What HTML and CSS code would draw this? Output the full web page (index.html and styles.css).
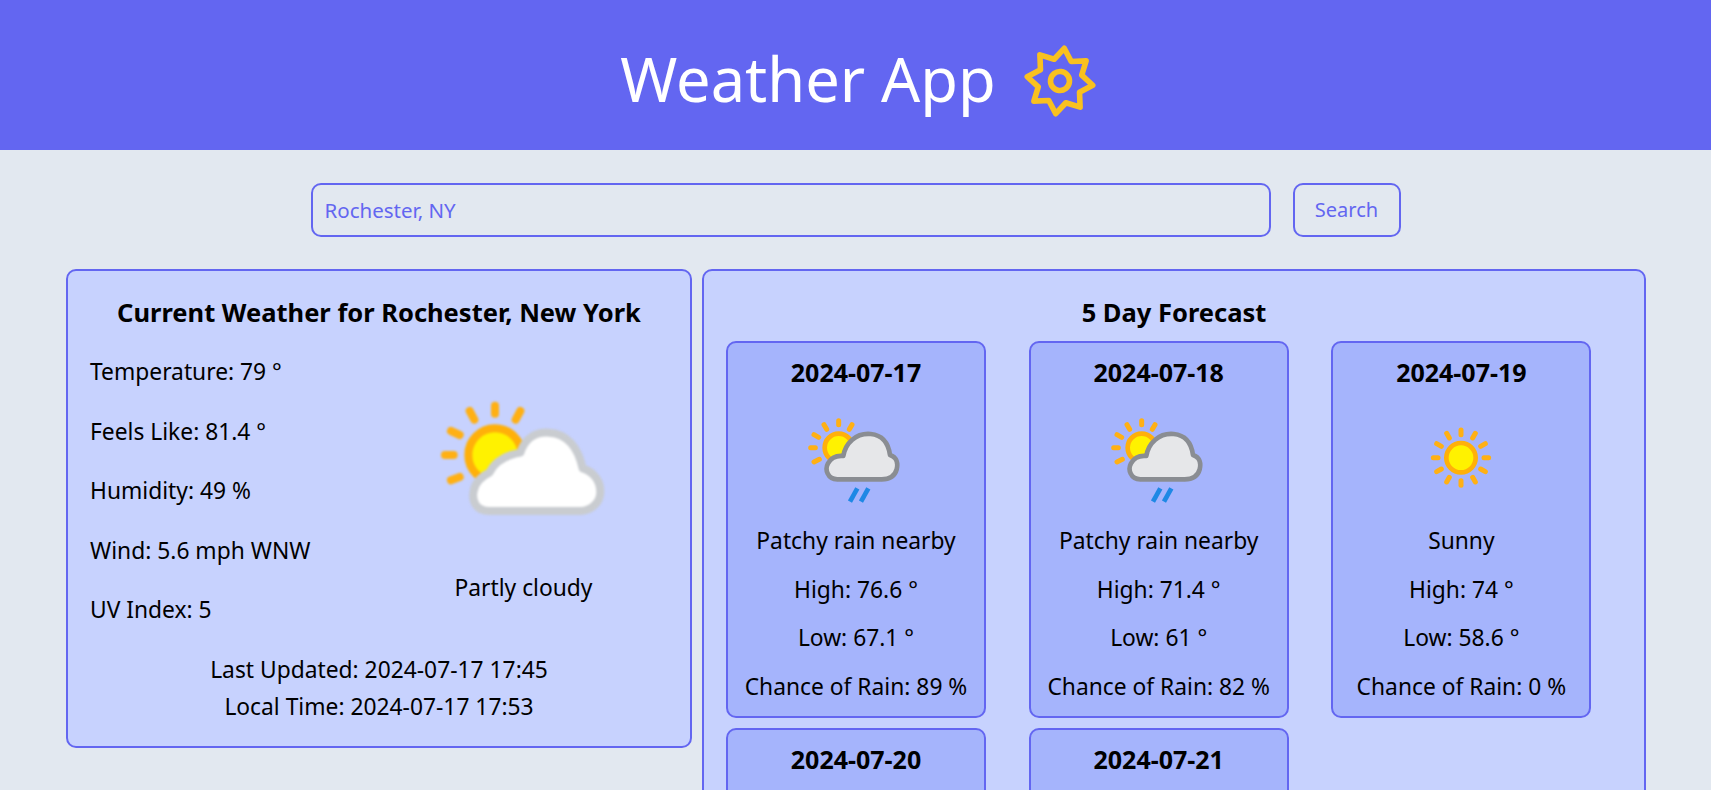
FILE: index.html
```html
<!DOCTYPE html>
<html lang="en">
<head>
<meta charset="utf-8">
<title>Weather App</title>
<link rel="stylesheet" href="styles.css">
</head>
<body>
<header class="app-header">
  <h1 class="app-title">Weather App</h1>
  <svg class="app-logo" viewBox="-36 -36 72 72" aria-hidden="true">
    <g transform="rotate(7.4)" fill="none" stroke="#f9c11f" stroke-width="5.6" stroke-linejoin="round">
      <polygon points="0,-33 8.6,-20.8 23.3,-23.3 20.8,-8.6 33,0 20.8,8.6 23.3,23.3 8.6,20.8 0,33 -8.6,20.8 -23.3,23.3 -20.8,8.6 -33,0 -20.8,-8.6 -23.3,-23.3 -8.6,-20.8"/>
      <circle r="9.5"/>
    </g>
  </svg>
</header>
<form class="search">
  <input class="search-input" type="text" placeholder="Rochester, NY">
  <button class="search-button" type="button">Search</button>
</form>
<main class="panels">
  <section class="panel">
    <h2 class="panel-title">Current Weather for Rochester, New York</h2>
    <div class="current">
      <div class="current-stats">
        <p>Temperature: 79 °</p>
        <p>Feels Like: 81.4 °</p>
        <p>Humidity: 49 %</p>
        <p>Wind: 5.6 mph WNW</p>
        <p>UV Index: 5</p>
      </div>
      <div class="current-condition">
        <svg class="icon-large" viewBox="0 0 618 450" aria-hidden="true">
          <g stroke="#ffb014" stroke-width="24" stroke-linecap="round">
            <line x1="222" y1="74" x2="222" y2="98"/>
            <line x1="146" y1="90" x2="160" y2="116"/>
            <line x1="298" y1="90" x2="284" y2="116"/>
            <line x1="90" y1="150" x2="116" y2="162"/>
            <line x1="72" y1="222" x2="98" y2="222"/>
            <line x1="90" y1="298" x2="116" y2="288"/>
          </g>
          <circle cx="222" cy="222" r="80" fill="#fff200" stroke="#ffb00a" stroke-width="24"/>
          <path d="M205 390 C165 390 152 360 158 330 C163 300 185 285 205 275 C222 240 260 222 298 215 C312 172 345 152 385 155 C435 158 470 195 485 262 C518 272 538 300 538 332 C538 365 510 390 478 390 Z" fill="#fff" stroke="#c9ccd0" stroke-width="24" stroke-linejoin="round"/>
        </svg>
        <p class="condition-label">Partly cloudy</p>
      </div>
    </div>
    <div class="current-times">
      <p>Last Updated: 2024-07-17 17:45</p>
      <p>Local Time: 2024-07-17 17:53</p>
    </div>
  </section>
  <section class="panel panel-forecast">
    <h2 class="panel-title">5 Day Forecast</h2>
    <div class="forecast-grid">
      <article class="day">
        <h3 class="day-date">2024-07-17</h3>
        <svg class="icon-day" viewBox="18 0 420 360" aria-hidden="true">
          <g stroke="#ffb014" stroke-width="15" stroke-linecap="round">
            <line x1="176" y1="62" x2="176" y2="74"/><line x1="132" y1="74" x2="140" y2="88"/><line x1="216" y1="74" x2="208" y2="88"/>
            <line x1="102" y1="104" x2="116" y2="112"/><line x1="92" y1="143" x2="106" y2="143"/><line x1="102" y1="186" x2="118" y2="178"/>
          </g>
          <circle cx="176" cy="143" r="42" fill="#fff200" stroke="#ffb00a" stroke-width="14"/>
          <path d="M172 238 C142 238 134 208 144 190 C154 172 170 166 190 168 C196 130 228 98 272 102 C312 106 326 135 330 165 C352 172 354 192 350 208 C344 230 325 238 305 238 Z" fill="#e6e7e9" stroke="#8a8d92" stroke-width="14" stroke-linejoin="round"/>
          <g stroke="#1e88e5" stroke-width="14"><line x1="232" y1="265" x2="210" y2="305"/><line x1="265" y1="265" x2="243" y2="305"/></g>
        </svg>
        <p>Patchy rain nearby</p>
        <p>High: 76.6 °</p>
        <p>Low: 67.1 °</p>
        <p>Chance of Rain: 89 %</p>
      </article>
      <article class="day">
        <h3 class="day-date">2024-07-18</h3>
        <svg class="icon-day" viewBox="18 0 420 360" aria-hidden="true">
          <g stroke="#ffb014" stroke-width="15" stroke-linecap="round">
            <line x1="176" y1="62" x2="176" y2="74"/><line x1="132" y1="74" x2="140" y2="88"/><line x1="216" y1="74" x2="208" y2="88"/>
            <line x1="102" y1="104" x2="116" y2="112"/><line x1="92" y1="143" x2="106" y2="143"/><line x1="102" y1="186" x2="118" y2="178"/>
          </g>
          <circle cx="176" cy="143" r="42" fill="#fff200" stroke="#ffb00a" stroke-width="14"/>
          <path d="M172 238 C142 238 134 208 144 190 C154 172 170 166 190 168 C196 130 228 98 272 102 C312 106 326 135 330 165 C352 172 354 192 350 208 C344 230 325 238 305 238 Z" fill="#e6e7e9" stroke="#8a8d92" stroke-width="14" stroke-linejoin="round"/>
          <g stroke="#1e88e5" stroke-width="14"><line x1="232" y1="265" x2="210" y2="305"/><line x1="265" y1="265" x2="243" y2="305"/></g>
        </svg>
        <p>Patchy rain nearby</p>
        <p>High: 71.4 °</p>
        <p>Low: 61 °</p>
        <p>Chance of Rain: 82 %</p>
      </article>
      <article class="day">
        <h3 class="day-date">2024-07-19</h3>
        <svg class="icon-day" viewBox="0 0 420 360" aria-hidden="true">
          <g stroke="#ffb014" stroke-width="15" stroke-linecap="round">
            <line x1="210" y1="90" x2="210" y2="104"/><line x1="210" y1="242" x2="210" y2="256"/><line x1="127" y1="173" x2="141" y2="173"/><line x1="279" y1="173" x2="293" y2="173"/>
            <line x1="167" y1="100" x2="175" y2="114"/><line x1="253" y1="100" x2="245" y2="114"/><line x1="167" y1="246" x2="175" y2="232"/><line x1="253" y1="246" x2="245" y2="232"/>
            <line x1="137" y1="131" x2="151" y2="139"/><line x1="283" y1="131" x2="269" y2="139"/><line x1="137" y1="215" x2="151" y2="207"/><line x1="283" y1="215" x2="269" y2="207"/>
          </g>
          <circle cx="210" cy="173" r="44" fill="#fff200" stroke="#ffb00a" stroke-width="14"/>
        </svg>
        <p>Sunny</p>
        <p>High: 74 °</p>
        <p>Low: 58.6 °</p>
        <p>Chance of Rain: 0 %</p>
      </article>
      <article class="day day-clipped">
        <h3 class="day-date">2024-07-20</h3>
      </article>
      <article class="day day-clipped">
        <h3 class="day-date">2024-07-21</h3>
      </article>
    </div>
  </section>
</main>
</body>
</html>
```

FILE: styles.css
```css
* { box-sizing: border-box; }
html, body { margin: 0; }
body {
  background: #e2e8f0;
  color: #000;
  font-family: "Noto Sans", "Open Sans", sans-serif;
  font-size: 22.8px;
  line-height: 32px;
}
p, h1, h2, h3 { margin: 0; }

.app-header {
  height: 150px;
  background: #6366f1;
  display: flex;
  align-items: center;
  justify-content: center;
  gap: 28px;
  padding: 8px 0 0 5px;
}
.app-title {
  color: #fff;
  font-size: 61.4px;
  font-weight: 400;
  line-height: 1;
}
.app-logo { width: 72px; height: 72px; margin-top: 3px; }

.search {
  display: flex;
  justify-content: center;
  gap: 22px;
  padding: 33px 0 32px;
}
.search-input, .search-button {
  height: 54px;
  background: transparent;
  border: 2px solid #6366f1;
  border-radius: 10px;
  color: #6366f1;
  font: inherit;
}
.search-input { width: 960px; padding: 0 12px; outline: none; font-size: 20.5px; }
.search-input::placeholder { color: #6366f1; opacity: 1; }
.search-button { width: 108px; padding: 0; font-size: 20px; }

.panels {
  display: grid;
  grid-template-columns: 626px 1fr;
  gap: 10px;
  align-items: start;
  padding: 0 65px 0 66px;
}
.panel {
  background: #c7d2fe;
  border: 2px solid #6366f1;
  border-radius: 10px;
  padding: 21px 22px 23px;
}
.panel-title {
  font-size: 25.5px;
  font-weight: 700;
  line-height: 40px;
  text-align: center;
}
.current {
  display: grid;
  grid-template-columns: 1fr 1fr;
  margin-top: 24px;
}
.current-stats { display: flex; flex-direction: column; gap: 27.5px; }
.current-condition { display: flex; flex-direction: column; align-items: center; }
.icon-large { width: 206px; height: 150px; margin-top: 25px; filter: blur(1.2px); }
.condition-label { margin-top: 41px; }
.current-times {
  display: flex;
  flex-direction: column;
  gap: 4.5px;
  margin-top: 28px;
  text-align: center;
}

.panel-forecast { padding-bottom: 22px; min-height: 900px; }
.forecast-grid {
  display: grid;
  grid-template-columns: repeat(3, 260px);
  column-gap: 42.7px;
  row-gap: 10px;
  margin-top: 9px;
}
.day {
  background: #a5b4fc;
  border: 2px solid #6366f1;
  border-radius: 10px;
  height: 377px;
  padding: 13px 0 0;
  display: flex;
  flex-direction: column;
  align-items: center;
  gap: 16.5px;
  text-align: center;
}
.day-date { font-size: 25px; font-weight: 700; line-height: 32px; }
.icon-day { width: 140px; height: 120px; margin: -5px 0 -11px; filter: blur(0.7px); }
```
